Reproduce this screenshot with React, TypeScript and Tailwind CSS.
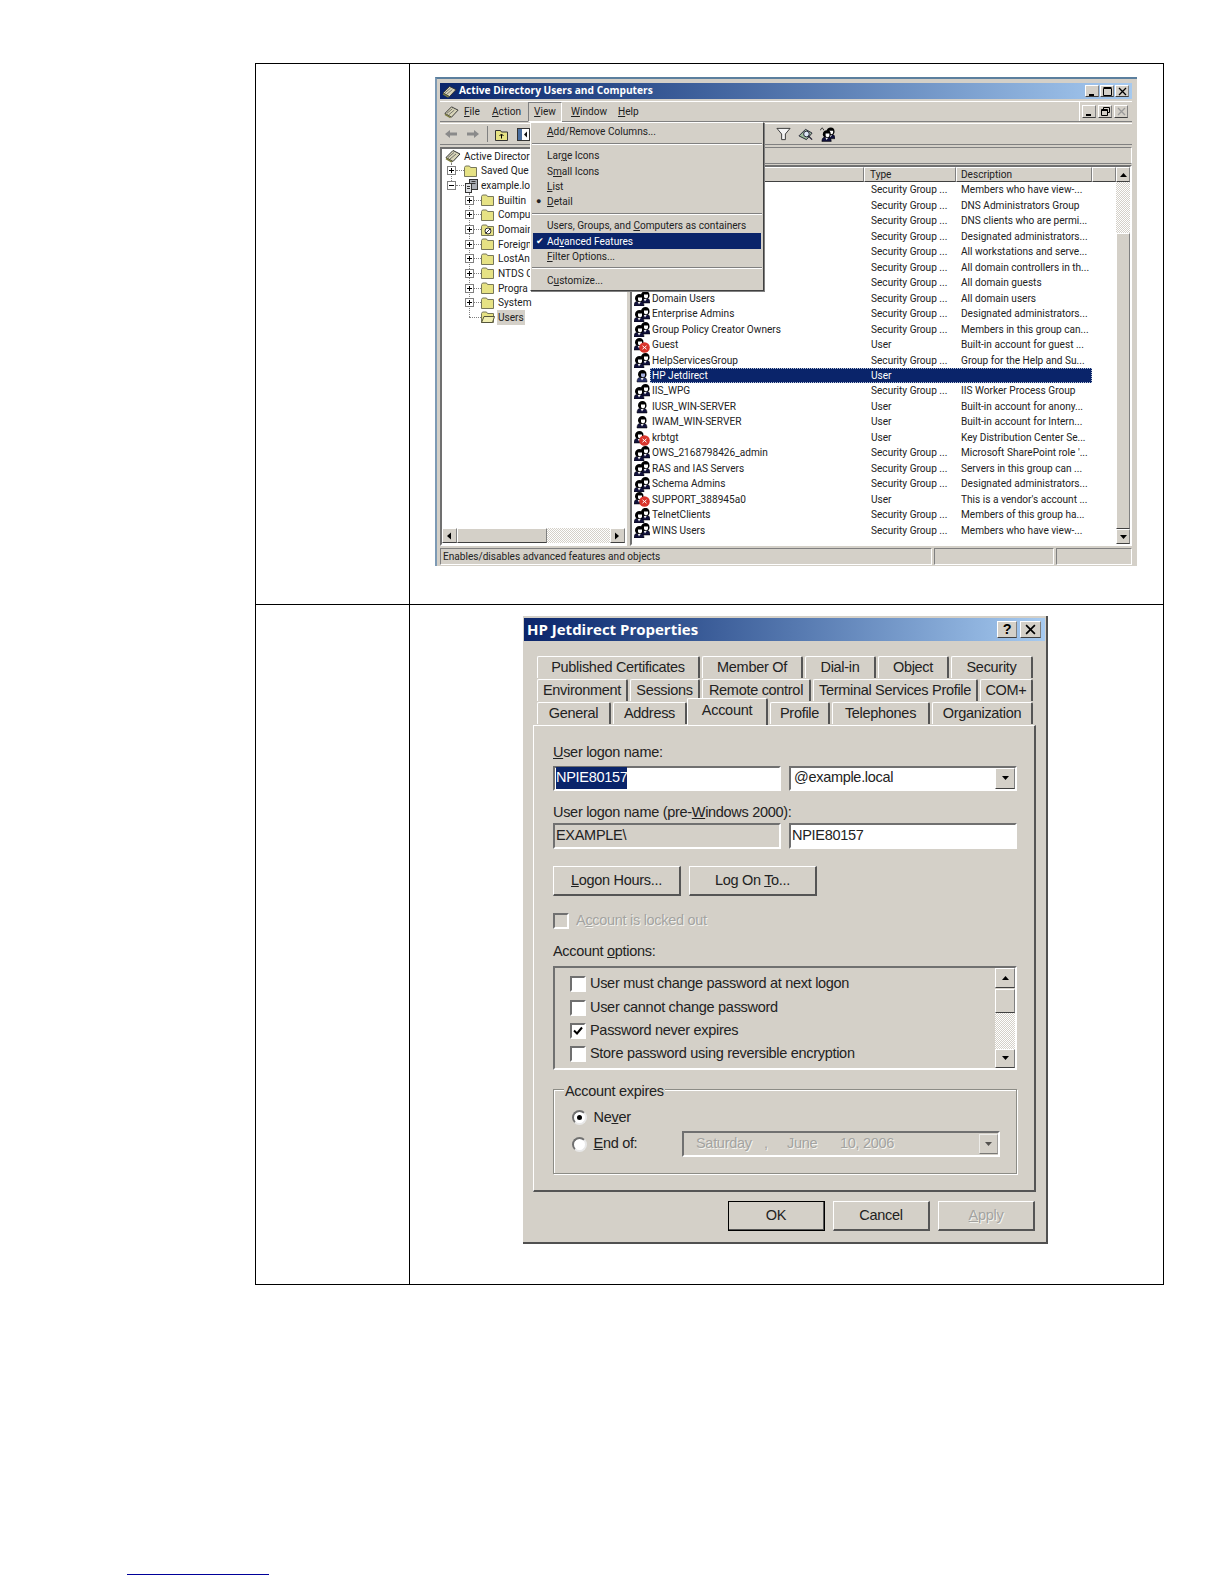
import type { ReactNode } from "react";

const raised = "border border-t-white border-l-white border-r-[#808080] border-b-[#404040]";
const sunken = "border-2 border-t-[#707070] border-l-[#707070] border-r-white border-b-white";
const thinSunken = "border border-t-[#808080] border-l-[#808080] border-r-white border-b-white";
const dither =
  "bg-[repeating-conic-gradient(#d4d0c8_0%_25%,#ffffff_0%_50%)] bg-[length:2px_2px]";
const disabledText = "text-[#a3a3a0] [text-shadow:1px_1px_0_#f4f4f0]";

const tree = [
  { label: "Saved Que", level: 1, exp: "+", icon: "folder" },
  { label: "example.lo", level: 1, exp: "-", icon: "domain" },
  { label: "Builtin", level: 2, exp: "+", icon: "folder" },
  { label: "Compu", level: 2, exp: "+", icon: "folder" },
  { label: "Domain", level: 2, exp: "+", icon: "ou" },
  { label: "Foreign", level: 2, exp: "+", icon: "folder" },
  { label: "LostAn", level: 2, exp: "+", icon: "folder" },
  { label: "NTDS C", level: 2, exp: "+", icon: "folder" },
  { label: "Progra", level: 2, exp: "+", icon: "folder" },
  { label: "System", level: 2, exp: "+", icon: "folder" },
];

const SG = "Security Group ...";

const rows = [
  { name: "", icon: "", type: SG, desc: "Members who have view-..." },
  { name: "", icon: "", type: SG, desc: "DNS Administrators Group" },
  { name: "", icon: "", type: SG, desc: "DNS clients who are permi..." },
  { name: "", icon: "", type: SG, desc: "Designated administrators..." },
  { name: "", icon: "", type: SG, desc: "All workstations and serve..." },
  { name: "", icon: "", type: SG, desc: "All domain controllers in th..." },
  { name: "", icon: "", type: SG, desc: "All domain guests" },
  { name: "Domain Users", icon: "group", type: SG, desc: "All domain users" },
  { name: "Enterprise Admins", icon: "group", type: SG, desc: "Designated administrators..." },
  { name: "Group Policy Creator Owners", icon: "group", type: SG, desc: "Members in this group can..." },
  { name: "Guest", icon: "off", type: "User", desc: "Built-in account for guest ..." },
  { name: "HelpServicesGroup", icon: "group", type: SG, desc: "Group for the Help and Su..." },
  { name: "HP Jetdirect", icon: "selected", type: "User", desc: "" },
  { name: "IIS_WPG", icon: "group", type: SG, desc: "IIS Worker Process Group" },
  { name: "IUSR_WIN-SERVER", icon: "user", type: "User", desc: "Built-in account for anony..." },
  { name: "IWAM_WIN-SERVER", icon: "user", type: "User", desc: "Built-in account for Intern..." },
  { name: "krbtgt", icon: "off", type: "User", desc: "Key Distribution Center Se..." },
  { name: "OWS_2168798426_admin", icon: "group", type: SG, desc: "Microsoft SharePoint role '..." },
  { name: "RAS and IAS Servers", icon: "group", type: SG, desc: "Servers in this group can ..." },
  { name: "Schema Admins", icon: "group", type: SG, desc: "Designated administrators..." },
  { name: "SUPPORT_388945a0", icon: "off", type: "User", desc: "This is a vendor's account ..." },
  { name: "TelnetClients", icon: "group", type: SG, desc: "Members of this group ha..." },
  { name: "WINS Users", icon: "group", type: SG, desc: "Members who have view-..." },
];

function Bust({ x, y, dim }: { x: number; y: number; dim?: boolean }) {
  return (
    <g transform={`translate(${x} ${y})`}>
      <path d="M0 12c0-4 2-5 5-5s5 1 5 5z" fill={dim ? "#27306b" : "#10103a"} stroke="#000" strokeWidth="0.5" />
      <path d="M3.500 7.500l1.500 3 2-3z" fill="#f2f2f2" />
      <path d="M1 4.500C1 1.500 3 0 5.500 0S9.500 1.500 9.500 4.500c0 2-1 3.500-4 3.500S1 6.500 1 4.500z" fill="#000" />
      <path d="M4 3.500h4v2c0 1-.9 1.800-2 1.800S4 6.500 4 5.500z" fill={dim ? "#a4aedc" : "#fff"} />
    </g>
  );
}

function Principal({ kind }: { kind: string }) {
  if (!kind) return <span className="w-4 h-4 shrink-0" />;
  return (
    <svg viewBox="0 0 16 16" className="w-4 h-4 shrink-0">
      {kind === "group" && (
        <>
          <Bust x={6} y={1} />
          <Bust x={0} y={4} />
        </>
      )}
      {kind === "user" && <Bust x={3} y={2} />}
      {kind === "selected" && <Bust x={3} y={2} dim />}
      {kind === "off" && (
        <>
          <Bust x={0} y={1} />
          <circle cx="10.500" cy="10.500" r="5.300" fill="#d9342b" />
          <path d="M8.500 8.800l4 3.400m0-3.400l-4 3.400" stroke="#fff" strokeWidth="1" />
        </>
      )}
    </svg>
  );
}

function Folder({ open }: { open?: boolean }) {
  return (
    <svg viewBox="0 0 14 14" className="w-[14px] h-[14px] shrink-0">
      <path d="M0.500 3.500l1-1.500h4l1 1.500h6v9h-12z" fill="#e6e284" stroke="#77775a" strokeWidth="1" />
      {open && <path d="M0.500 12.500l2.500-6h10.500l-2 6z" fill="#f0eeb0" stroke="#55553c" strokeWidth="1" />}
    </svg>
  );
}

function Console({ className }: { className: string }) {
  return (
    <svg viewBox="0 0 16 14" className={className}>
      <path d="M1 8.500l7-7 7 3.500-7 7.500z" fill="#d8d4b8" stroke="#333" />
      <path d="M3 8.500l6-5M5 10l6-5" stroke="#555" strokeWidth="0.800" />
      <path d="M1 9.500l6 3.500" stroke="#7d7d40" strokeWidth="1.500" />
    </svg>
  );
}

function TreeIcon({ kind }: { kind: string }) {
  if (kind === "domain") {
    return (
      <svg viewBox="0 0 14 14" className="w-[14px] h-[14px] shrink-0">
        <rect x="5.500" y="0.500" width="8" height="10" fill="#a9adb5" stroke="#333" />
        <rect x="1.500" y="4.500" width="6" height="9" fill="#dfe1e4" stroke="#333" />
        <path d="M7.500 2.500h4M7.500 4.500h4M3 7.500h3M3 9.500h3" stroke="#333" />
      </svg>
    );
  }
  if (kind === "ou") {
    return (
      <svg viewBox="0 0 14 14" className="w-[14px] h-[14px] shrink-0">
        <path d="M0.500 3.500l1-1.500h4l1 1.500h6v9h-12z" fill="#e6e284" stroke="#77775a" />
        <circle cx="7" cy="8" r="3" fill="#fff" stroke="#333" />
        <path d="M4.500 10.500l5-5" stroke="#333" />
      </svg>
    );
  }
  return <Folder />;
}

function Expander({ sign }: { sign: string }) {
  return (
    <span className="relative w-[9px] h-[9px] shrink-0 bg-white border border-[#808080]">
      <span className="absolute left-[1px] right-[1px] top-[3px] h-px bg-black" />
      {sign === "+" && <span className="absolute top-[1px] bottom-[1px] left-[3px] w-px bg-black" />}
    </span>
  );
}

function Glyph({ kind, dim }: { kind: "min" | "max" | "restore" | "close"; dim?: boolean }) {
  const c = dim ? "#9a9a9a" : "#000";
  return (
    <svg viewBox="0 0 9 9" className="w-[9px] h-[9px]">
      {kind === "min" && <rect x="1" y="7" width="5" height="2" fill={c} />}
      {kind === "max" && <path d="M0.500 1.500h8v7h-8zM0.500 0.500h8" fill="none" stroke={c} />}
      {kind === "restore" && <path d="M2.500 2.500v-2h6v5h-2M0.500 2.500h6v6h-6zM0.500 3.500h6" fill="none" stroke={c} />}
      {kind === "close" && <path d="M1 1l7 7m0-7l-7 7" fill="none" stroke={c} strokeWidth="1.300" />}
    </svg>
  );
}

function CaptionButton({ kind, dim, tall }: { kind: "min" | "max" | "restore" | "close"; dim?: boolean; tall?: boolean }) {
  return (
    <span className={`${raised} w-[14px] ${tall ? "h-[13px]" : "h-[12px]"} flex items-center justify-center bg-[#d4d0c8]`}>
      <Glyph kind={kind} dim={dim} />
    </span>
  );
}

function ArrowButton({ dir, className = "" }: { dir: "up" | "down" | "left" | "right"; className?: string }) {
  const d = { up: "M1 6l3.500-4 3.500 4z", down: "M1 2l3.500 4 3.500-4z", left: "M6 0.500l-4 3.500 4 3.500z", right: "M2 0.500l4 3.500-4 3.500z" }[dir];
  return (
    <span className={`${raised} flex items-center justify-center bg-[#d4d0c8] shrink-0 ${className}`}>
      <svg viewBox="0 0 9 8" className="w-[9px] h-2">
        <path d={d} fill="#000" />
      </svg>
    </span>
  );
}

function MenuRow({ label, mark, active }: { label: ReactNode; mark?: string; active?: boolean }) {
  return (
    <div
      className={`flex items-center h-[15.400px] mx-[2px] whitespace-nowrap ${active ? "bg-[#0a246a] text-white" : "text-[#222]"}`}
    >
      <span className="w-[14px] pl-[3px] text-[9px] leading-none shrink-0">{mark}</span>
      <span>{label}</span>
    </div>
  );
}

function MenuSep() {
  return (
    <div className="h-[8.400px] flex flex-col justify-center mx-[1px]">
      <div className="h-px bg-[#808080]" />
      <div className="h-px bg-white" />
    </div>
  );
}

function ViewMenu() {
  return (
    <div className="absolute left-[93px] top-[43px] w-[234px] h-[169px] bg-[#d4d0c8] border border-t-white border-l-white border-r-[#404040] border-b-[#404040] pt-[1.300px] shadow-[1px_1px_0_#808080]">
      <MenuRow label={<><u>A</u>dd/Remove Columns...</>} />
      <MenuSep />
      <MenuRow label={<>Lar<u>g</u>e Icons</>} />
      <MenuRow label={<>S<u>m</u>all Icons</>} />
      <MenuRow label={<><u>L</u>ist</>} />
      <MenuRow mark="●" label={<><u>D</u>etail</>} />
      <MenuSep />
      <MenuRow label={<>Users, Groups, and <u>C</u>omputers as containers</>} />
      <MenuRow active mark="✔" label={<>Ad<u>v</u>anced Features</>} />
      <MenuRow label={<><u>F</u>ilter Options...</>} />
      <MenuSep />
      <MenuRow label={<>C<u>u</u>stomize...</>} />
    </div>
  );
}

function AdWindow() {
  return (
    <div className="relative w-[702px] h-[489px] bg-[#d4d0c8] border-t-2 border-t-[#5b7f9e] border-l-2 border-l-[#7d9ab5] pl-[3px] pr-[5px] pt-[4px] text-[10.100px] text-[#222] [font-family:Roboto,sans-serif]">
      {/* title bar */}
      <div className="flex items-center h-[16px] pl-[2px] pr-[3px] bg-gradient-to-r from-[#0a246a] to-[#a6caf0]">
        <Console className="w-[15px] h-[13px] mr-[2px]" />
        <span className="font-bold text-[10.200px] text-white [font-family:'Open_Sans',sans-serif]">Active Directory Users and Computers</span>
        <div className="flex ml-auto gap-[1px]">
          <CaptionButton kind="min" />
          <CaptionButton kind="max" />
          <CaptionButton kind="close" />
        </div>
      </div>

      {/* menu bar */}
      <div className="flex items-center h-[21px] mt-[2px] pl-1 border-t border-t-white border-b border-b-[#808080]">
        <Console className="w-[15px] h-[14px] mr-[5px]" />
        <span className="w-[28px]"><u>F</u>ile</span>
        <span className="w-[36px]"><u>A</u>ction</span>
        <span className={`${thinSunken} w-[34px] h-[20px] flex items-center justify-center`}>
          <u>V</u>iew
        </span>
        <span className="w-[47px] ml-[9px]"><u>W</u>indow</span>
        <span><u>H</u>elp</span>
        <div className="flex ml-auto gap-[2px] pr-[4px] h-[19px] items-center border-l border-l-white pl-[2px]">
          <CaptionButton kind="min" tall />
          <CaptionButton kind="restore" tall />
          <CaptionButton kind="close" tall dim />
        </div>
      </div>

      {/* toolbar */}
      <div className="flex items-center h-[22px] mt-px pl-[5px] border-t border-t-white border-b border-b-[#808080]">
        <svg viewBox="0 0 12 10" className="w-3 h-[10px] mr-[10px]">
          <path d="M0 5l5-4v2.500h7v3H5V9z" fill="#8a8a8a" />
        </svg>
        <svg viewBox="0 0 12 10" className="w-3 h-[10px] mr-[8px]">
          <path d="M12 5L7 1v2.500H0v3h7V9z" fill="#8a8a8a" />
        </svg>
        <span className="w-px h-4 bg-[#808080] mr-[7px]" />
        <svg viewBox="0 0 13 13" className="w-[13px] h-[13px] mr-[9px]">
          <path d="M0.500 2.500h5l1 1.500h6v8.500h-12z" fill="#e6e284" stroke="#333" />
          <path d="M6.500 10.500v-4M4.500 8l2-2 2 2" fill="none" stroke="#000" />
        </svg>
        <svg viewBox="0 0 13 13" className="w-[13px] h-[13px]">
          <rect x="0.500" y="0.500" width="12" height="12" fill="#fff" stroke="#333" />
          <rect x="1" y="1" width="4" height="11" fill="#4b6f9f" />
          <path d="M7 6.500l3-3v6z" fill="#111" />
        </svg>
        <div className="flex items-center gap-[7px] ml-[246px]">
          <svg viewBox="0 0 16 14" className="w-[15px] h-[14px]">
            <path d="M1 1h14L10 7v6H6V7z" fill="#f4f4f4" stroke="#333" />
          </svg>
          <svg viewBox="0 0 16 14" className="w-[15px] h-[14px]">
            <path d="M1 9l7-7 7 4-6 7z" fill="#9dbb9a" stroke="#223" />
            <circle cx="9" cy="7" r="3" fill="#dfe8f6" stroke="#223" />
            <path d="M11 9l4 4" stroke="#223" strokeWidth="1.500" />
          </svg>
          <svg viewBox="0 0 16 16" className="w-[15px] h-4">
            <path d="M0.500 4c1-3 2.500-3 3.500 0" stroke="#111" fill="none" />
            <Bust x={6} y={1} />
            <Bust x={2} y={4} />
          </svg>
        </div>
      </div>

      {/* panes */}
      <div className="flex gap-[3px] h-[399px] mt-[2px]">
        <div className={`${sunken} w-[187px] bg-white flex flex-col`}>
          <div className="flex-1 relative">
            <span className="absolute left-[9px] top-[14px] h-[22px] border-l border-dotted border-[#808080]" />
            <span className="absolute left-[27px] top-[44px] h-[124px] border-l border-dotted border-[#808080]" />
            <div className="flex items-center h-[14.650px] pl-[3px] gap-[3px]">
              <Console className="w-4 h-[14px]" />
              <span>Active Director</span>
            </div>
            {tree.map((t) => (
              <div
                key={t.label}
                className={`flex items-center h-[14.650px] ${t.level === 1 ? "pl-[5px]" : "pl-[23px]"}`}
              >
                <Expander sign={t.exp} />
                <span className={`${t.level === 1 ? "w-[8px]" : "w-[7px]"} border-t border-dotted border-[#808080]`} />
                <TreeIcon kind={t.icon} />
                <span className="ml-[3px]">{t.label}</span>
              </div>
            ))}
            <div className="flex items-center h-[14.650px] pl-[27px]">
              <span className="w-[12px] border-t border-dotted border-[#808080]" />
              <Folder open />
              <span className="ml-[2px] px-[1px] bg-[#d4d0c8]">Users</span>
            </div>
          </div>
          <div className="flex h-[15px] shrink-0 mb-[1px]">
            <ArrowButton dir="left" className="w-[15px]" />
            <span className={`${raised} w-[90px] bg-[#d4d0c8]`} />
            <span className={`flex-1 ${dither}`} />
            <ArrowButton dir="right" className="w-[15px]" />
          </div>
        </div>

        <div className="flex-1 flex flex-col">
          <div className="h-[17px] border border-t-[#808080] border-l-[#808080] border-r-white border-b-[#808080]" />
          <div className={`${sunken} flex-1 bg-white mt-[1px] flex`}>
            <div className="flex-1 flex flex-col">
              <div className="flex h-[15px] shrink-0 bg-[#d4d0c8]">
                <span className={`${raised} w-[232px]`} />
                <span className={`${raised} w-[92px] pl-[5px] leading-[14px]`}>Type</span>
                <span className={`${raised} w-[136px] pl-[4px] leading-[14px]`}>Description</span>
                <span className={`${raised} flex-1`} />
              </div>
              <div>
                {rows.map((r, i) => (
                  <div key={i} className="flex items-center h-[15.490px] pl-[2px] whitespace-nowrap">
                    <Principal kind={r.icon} />
                    <div
                      className={`flex items-center h-[15px] w-[442px] ${
                        r.icon === "selected"
                          ? "bg-[#0a246a] text-white outline outline-1 outline-dotted outline-[#b8c4d8] -outline-offset-1"
                          : ""
                      }`}
                    >
                      <span className="w-[220px] pl-[2px] shrink-0">{r.name}</span>
                      <span className="w-[91px] pl-px shrink-0">{r.type}</span>
                      <span className="shrink-0">{r.desc}</span>
                    </div>
                  </div>
                ))}
              </div>
            </div>
            <div className="w-[14px] flex flex-col shrink-0">
              <ArrowButton dir="up" className="h-[15px]" />
              <span className={`h-[51px] shrink-0 ${dither}`} />
              <span className={`${raised} flex-1 bg-[#d4d0c8]`} />
              <ArrowButton dir="down" className="h-[15px]" />
            </div>
          </div>
        </div>
      </div>

      {/* status bar */}
      <div className="flex h-[17px] mt-[2px] leading-[16px] gap-[2px]">
        <span className={`flex-1 pl-[2px] ${thinSunken}`}>Enables/disables advanced features and objects</span>
        <span className={`w-[120px] ${thinSunken}`} />
        <span className={`w-[76px] ${thinSunken}`} />
      </div>

      <ViewMenu />
    </div>
  );
}

function Tab({ w, label, active, className = "" }: { w: number; label: string; active?: boolean; className?: string }) {
  return (
    <span
      style={{ width: w }}
      className={`flex items-center justify-center shrink-0 border-t border-l border-t-white border-l-white border-r-2 border-r-[#555] rounded-t-[2px] whitespace-nowrap ${
        active ? "h-[27px] -mt-[3px] pb-[3px] bg-[#d4d0c8] relative z-10" : "h-[22px] mt-px"
      } ${className}`}
    >
      {label}
    </span>
  );
}

function Btn({ w, children, strong, dim }: { w: number; children: ReactNode; strong?: boolean; dim?: boolean }) {
  return (
    <span
      style={{ width: w }}
      className={`flex items-center justify-center h-[30px] border-t border-l border-t-white border-l-white border-r-2 border-b-2 border-r-[#555] border-b-[#555] ${
        strong ? "outline outline-1 outline-black -outline-offset-1" : ""
      } ${dim ? disabledText : ""}`}
    >
      {children}
    </span>
  );
}

function Check({ checked, disabled }: { checked?: boolean; disabled?: boolean }) {
  return (
    <span
      className={`${sunken} w-[16px] h-[16px] shrink-0 flex items-center justify-center ${
        disabled ? "bg-[#d4d0c8]" : "bg-white"
      }`}
    >
      {checked && (
        <svg viewBox="0 0 10 10" className="w-[10px] h-[10px]">
          <path d="M1 4.500l3 3 5-6" fill="none" stroke="#000" strokeWidth="2" />
        </svg>
      )}
    </span>
  );
}

function Radio({ checked }: { checked?: boolean }) {
  return (
    <span className="w-[15px] h-[15px] shrink-0 rounded-full bg-white border-2 border-t-[#707070] border-l-[#707070] border-r-[#e8e8e8] border-b-[#e8e8e8] flex items-center justify-center">
      {checked && <span className="w-[5px] h-[5px] rounded-full bg-black" />}
    </span>
  );
}

function Dialog() {
  return (
    <div className="w-[525px] h-[628px] bg-[#d4d0c8] pt-[2px] pl-px pr-px text-[14.500px] tracking-[-0.3px] text-[#222] [font-family:'Liberation_Sans',sans-serif] border-r-2 border-b-2 border-r-[#505050] border-b-[#505050]">
      <div className="flex items-center h-[23px] pl-[3px] pr-[4px] bg-gradient-to-r from-[#0a246a] to-[#a6caf0]">
        <span className="font-bold text-[15px] tracking-normal text-white [font-family:'Open_Sans',sans-serif]">HP Jetdirect Properties</span>
        <div className="flex ml-auto gap-[3px]">
          <span className={`${raised} w-[20px] h-[17px] bg-[#d4d0c8] flex items-center justify-center font-bold text-black`}>?</span>
          <span className={`${raised} w-[21px] h-[17px] bg-[#d4d0c8] flex items-center justify-center`}>
            <svg viewBox="0 0 10 10" className="w-[11px] h-[11px]">
              <path d="M1 1l8 8m0-8l-8 8" stroke="#000" strokeWidth="1.500" />
            </svg>
          </span>
        </div>
      </div>

      <div className="pl-[9px] pt-[14px]">
        <div className="flex gap-[2px] pl-[4px] h-[23px]">
          <Tab w={163} label="Published Certificates" />
          <Tab w={101} label="Member Of" />
          <Tab w={71} label="Dial-in" />
          <Tab w={71} label="Object" />
          <Tab w={82} label="Security" />
        </div>
        <div className="flex gap-[2px] pl-[4px] h-[23px]">
          <Tab w={91} label="Environment" />
          <Tab w={70} label="Sessions" />
          <Tab w={109} label="Remote control" />
          <Tab w={165} label="Terminal Services Profile" />
          <Tab w={53} label="COM+" />
        </div>
        <div className="flex gap-[2px] pl-[4px] h-[24px]">
          <Tab w={74} label="General" />
          <Tab w={74} label="Address" />
          <Tab w={81} label="Account" active className="-ml-[2px]" />
          <Tab w={60} label="Profile" />
          <Tab w={98} label="Telephones" />
          <Tab w={101} label="Organization" />
        </div>

        {/* account panel */}
        <div className="w-[503px] h-[467px] border-t border-l border-t-white border-l-white border-r-2 border-b-2 border-r-[#555] border-b-[#555] pl-[19px] pt-[15.500px]">
          <div className="leading-[20px]"><u>U</u>ser logon name:</div>
          <div className="flex gap-2 mt-[4px]">
            <div className={`${sunken} w-[228px] h-[25px] bg-white flex items-center pl-px`}>
              <span className="bg-[#0a246a] text-white">NPIE80157</span>
            </div>
            <div className={`${sunken} w-[228px] h-[25px] bg-white flex items-center pl-[3px]`}>
              <span>@example.local</span>
              <ArrowButton dir="down" className="ml-auto w-[20px] h-[21px]" />
            </div>
          </div>
          <div className="leading-[20px] mt-[11px]">User logon name (pre-<u>W</u>indows 2000):</div>
          <div className="flex gap-2 mt-[1px]">
            <div className={`${sunken} w-[228px] h-[26px] flex items-center pl-px`}>EXAMPLE\</div>
            <div className={`${sunken} w-[228px] h-[26px] bg-white flex items-center pl-px`}>NPIE80157</div>
          </div>
          <div className="flex gap-2 mt-[17.500px]">
            <Btn w={128}><span><u>L</u>ogon Hours...</span></Btn>
            <Btn w={128}><span>Log On <u>T</u>o...</span></Btn>
          </div>
          <div className={`flex items-center gap-[7px] mt-[16px] h-[18px] ${disabledText}`}>
            <Check disabled />
            <span>A<u>c</u>count is locked out</span>
          </div>
          <div className="leading-[20px] mt-[11px]">Account <u>o</u>ptions:</div>
          <div className={`${sunken} w-[464px] h-[103.600px] mt-[5px] flex`}>
            <div className="flex-1 pl-[15px] pt-[4.500px]">
              {[
                { label: "User must change password at next logon" },
                { label: "User cannot change password" },
                { label: "Password never expires", checked: true },
                { label: "Store password using reversible encryption" },
              ].map((o) => (
                <div key={o.label} className="flex items-center gap-[4px] h-[23.400px]">
                  <Check checked={o.checked} />
                  <span>{o.label}</span>
                </div>
              ))}
            </div>
            <div className="w-[20px] flex flex-col">
              <ArrowButton dir="up" className="h-[19.600px]" />
              <span className={`${raised} h-[24px] mt-px bg-[#d4d0c8]`} />
              <span className={`flex-1 ${dither}`} />
              <ArrowButton dir="down" className="h-[19px]" />
            </div>
          </div>

          <div className="relative w-[464px] h-[84.500px] mt-[19.700px] border border-[#8c8c86] shadow-[inset_1px_1px_0_#fff,1px_1px_0_#fff] pl-[17.500px] pt-[16.500px]">
            <span className="absolute left-[10px] -top-[9px] bg-[#d4d0c8] px-px leading-[20px]">Account expires</span>
            <div className="flex items-center h-[22px]">
              <Radio checked />
              <span className="ml-[7px]">Ne<u>v</u>er</span>
            </div>
            <div className="flex items-center h-[26px] mt-[2.500px]">
              <Radio />
              <span className="ml-[7px] w-[88.500px]"><u>E</u>nd of:</span>
              <div className={`${sunken} w-[318px] h-[26px] flex items-center pl-[12px] ${disabledText}`}>
                <span className="w-[68px]">Saturday</span>
                <span className="w-[23px]">,</span>
                <span className="w-[53px]">June</span>
                <span>10, 2006</span>
                <ArrowButton dir="down" className="ml-auto w-[19px] h-[20px] opacity-60" />
              </div>
            </div>
          </div>
        </div>

        <div className="flex justify-end gap-2 w-[502px] mt-[9px]">
          <Btn w={97} strong>OK</Btn>
          <Btn w={97}>Cancel</Btn>
          <Btn w={97} dim><span><u>A</u>pply</span></Btn>
        </div>
      </div>
    </div>
  );
}

export default function App() {
  return (
    <div className="min-h-[1584px] bg-white">
      <div className="pt-[63px] pl-[255px]">
        <div className="w-[909px] border border-black">
          <div className="flex h-[541px] border-b border-black">
            <div className="w-[154px] border-r border-black" />
            <div className="pl-[25px] pt-[13px]">
              <AdWindow />
            </div>
          </div>
          <div className="flex h-[679px]">
            <div className="w-[154px] border-r border-black" />
            <div className="pl-[113px] pt-[11px]">
              <Dialog />
            </div>
          </div>
        </div>
      </div>
      <div className="w-[142px] h-px ml-[127px] mt-[289px] bg-[#00009a]" />
    </div>
  );
}
